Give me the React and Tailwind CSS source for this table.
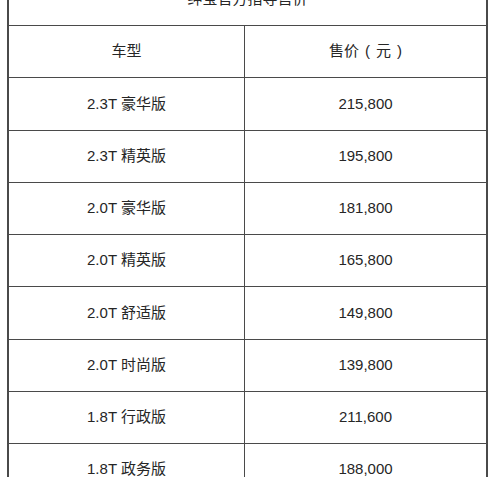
export default function App() {
  const rows = [
    ["2.3T 豪华版", "215,800"],
    ["2.3T 精英版", "195,800"],
    ["2.0T 豪华版", "181,800"],
    ["2.0T 精英版", "165,800"],
    ["2.0T 舒适版", "149,800"],
    ["2.0T 时尚版", "139,800"],
    ["1.8T 行政版", "211,600"],
    ["1.8T 政务版", "188,000"],
  ];
  return (
    <div
      className="w-[500px] h-[477px] overflow-hidden bg-white text-[#262626] text-[15px]"
      style={{ fontFamily: '"Liberation Sans", "Noto Sans CJK SC", sans-serif' }}
    >
      <div className="-mt-[27px] ml-[7px] w-[481px] border-x-2 border-[#4a4a4a]">
        <div className="h-[53px] border-b border-[#4a4a4a] flex items-center justify-center">
          绅宝官方指导售价
        </div>
        <div className="grid grid-cols-[236px_1fr] h-[52.25px] border-b border-[#4a4a4a]">
          <div className="border-r border-[#4a4a4a] flex items-center justify-center">车型</div>
          <div className="flex items-center justify-center">
            <span>售价</span>
            <span className="ml-[6px]">(</span>
            <span className="ml-[6px]">元</span>
            <span className="ml-[6px]">)</span>
          </div>
        </div>
        {rows.map(([a, b]) => (
          <div key={a} className="grid grid-cols-[236px_1fr] h-[52.25px] border-b border-[#4a4a4a]">
            <div className="border-r border-[#4a4a4a] flex items-center justify-center">{a}</div>
            <div className="flex items-center justify-center">{b}</div>
          </div>
        ))}
      </div>
    </div>
  );
}
